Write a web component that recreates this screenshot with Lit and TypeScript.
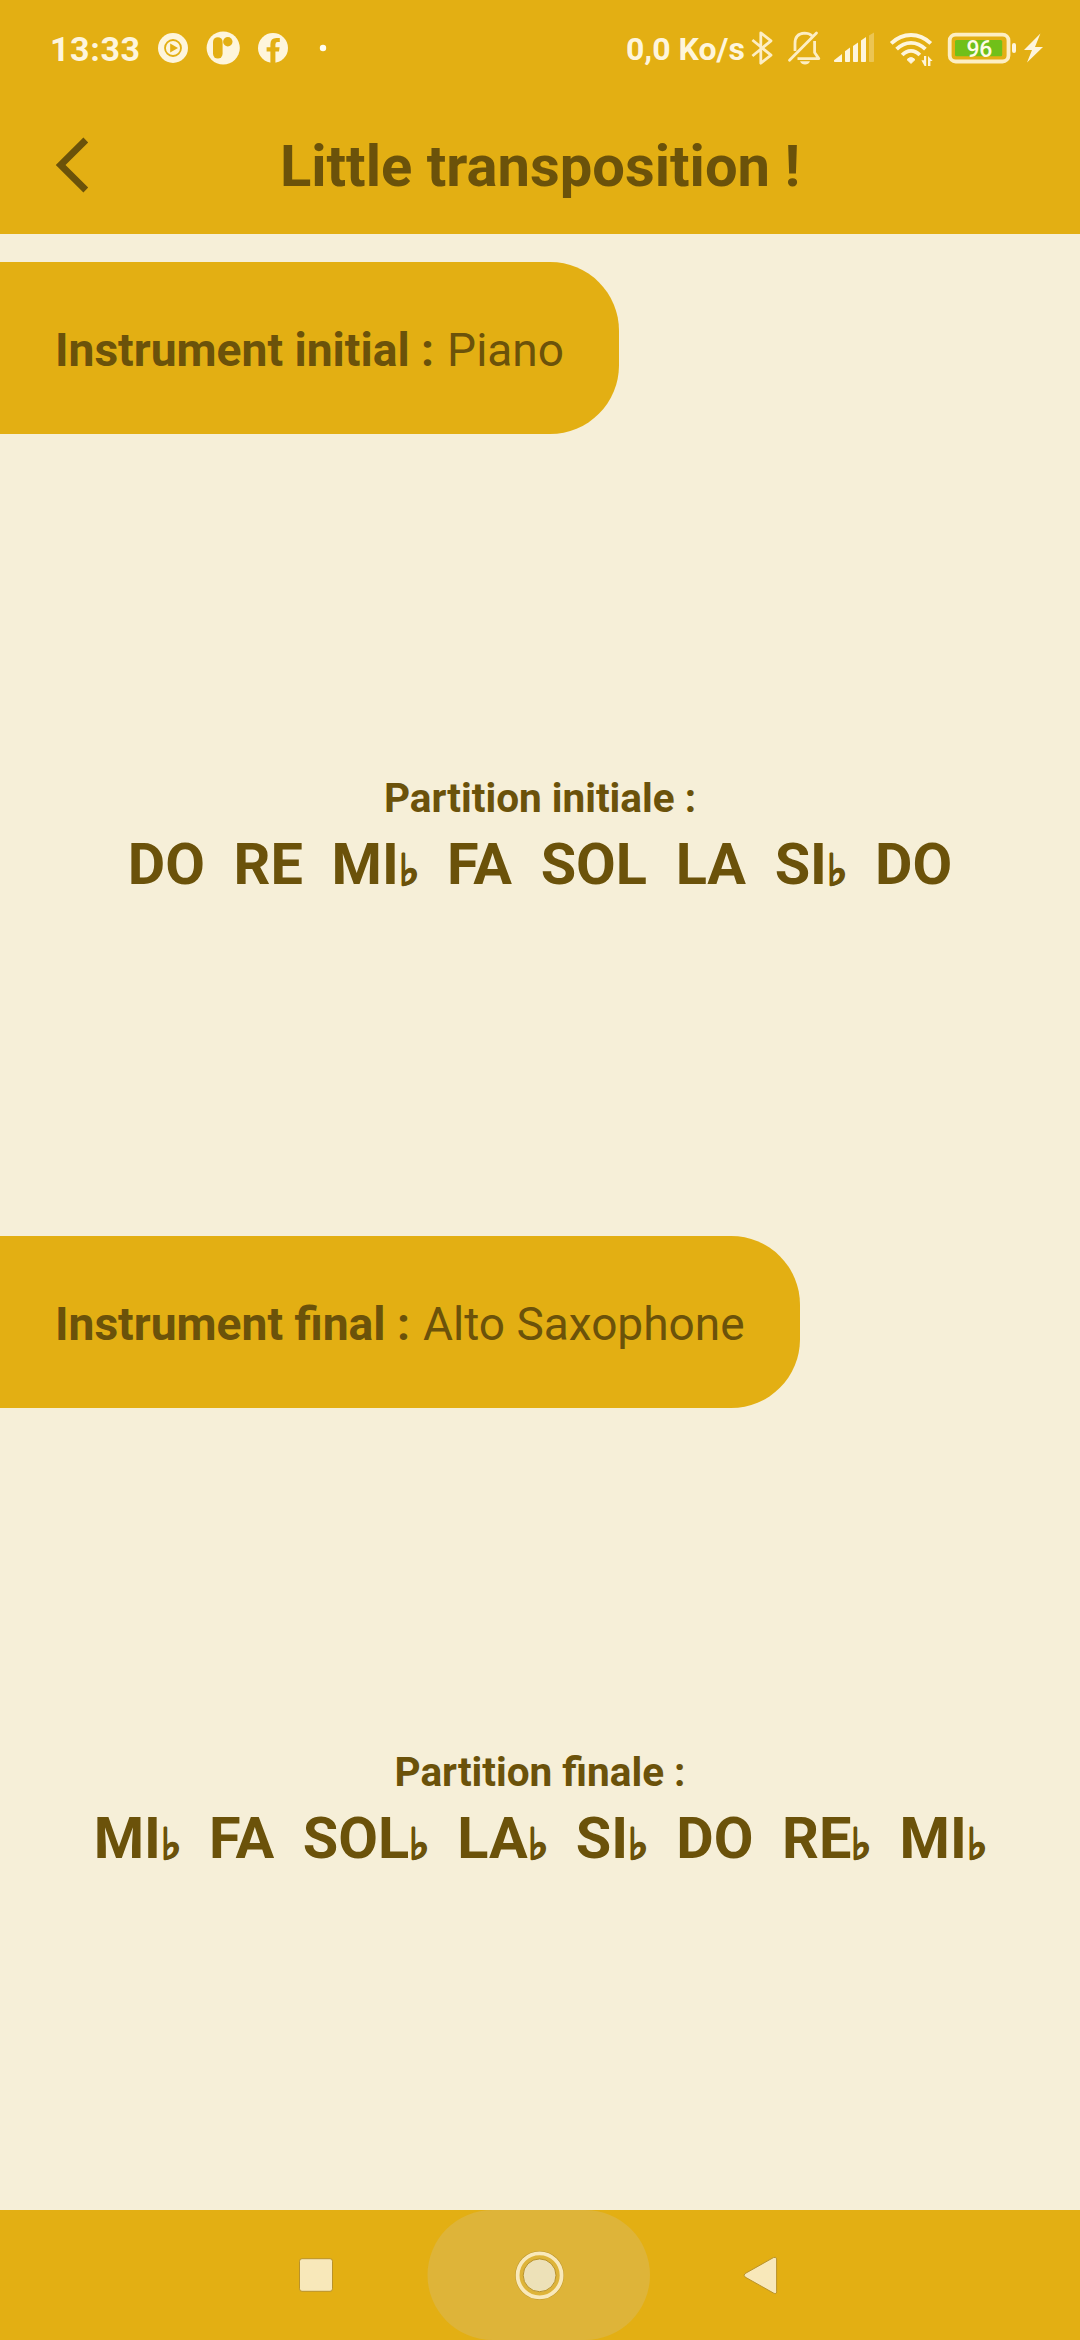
import { LitElement, html, css } from "lit";
import { customElement, property } from "lit/decorators.js";

@customElement("status-bar")
class StatusBar extends LitElement {
  static styles = css`
    :host {
      display: flex;
      align-items: center;
      justify-content: space-between;
      height: 96px;
      padding: 0 30px 0 50px;
      box-sizing: border-box;
      color: #fef5dc;
      font-family: Roboto, sans-serif;
      white-space: pre;
    }
    .group {
      display: flex;
      align-items: center;
      height: 96px;
    }
    .clock {
      width: 104px;
      font-size: 34px;
      font-weight: 700;
      line-height: 40px;
      letter-spacing: 0.6px;
      padding-top: 2px;
    }
    .speed {
      width: 122px;
      font-size: 32px;
      font-weight: 700;
      line-height: 38px;
      padding-top: 2px;
    }
    .icon {
      display: block;
      flex: none;
    }
    .pct {
      font-family: Roboto, sans-serif;
      font-size: 23px;
      font-weight: 500;
    }
  `;
  render() {
    const c = "#fef5dc";
    const d = "#fdeec4";
    const bg = "#e3af13";
    return html`
      <div class="group">
        <div class="clock">13:33</div>
        <svg class="icon" width="180" height="40" viewBox="154 28 180 40">
          <circle cx="173" cy="48" r="15" fill=${c} />
          <circle cx="173" cy="48" r="8" fill="none" stroke=${bg} stroke-width="1.8" />
          <path d="M170.2 43.6 178 48 170.2 52.4Z" fill=${bg} />
          <circle cx="223.2" cy="48" r="16.6" fill=${c} />
          <rect x="213" y="37.2" width="9.6" height="21.4" rx="4.8" fill=${bg} />
          <circle cx="227.8" cy="41.8" r="4.7" fill=${bg} />
          <circle cx="273" cy="48" r="15" fill=${c} />
          <path
            d="M270.4 64V51.6H266.6V47.2H270.4V44.2Q270.4 38 276.4 38H279.8V42H277.6Q275.4 42 275.4 44.4V47.2H279.6L279 51.6H275.4V64Z"
            fill=${bg}
          />
          <circle cx="323" cy="48" r="3.2" fill="#fffdf2" />
        </svg>
      </div>
      <div class="group">
        <div class="speed">0,0 Ko/s</div>
        <svg class="icon" width="302" height="40" viewBox="748 28 302 40">
          <path
            d="M752.4 40 771 55.2 760.8 63.2V32.8L771 40.8 752.4 56"
            fill="none" stroke=${d} stroke-width="2.8" stroke-linejoin="round"
          />
          <g fill="none" stroke=${d} stroke-width="2.8" stroke-linejoin="round">
            <path d="M795 51V43.5Q795 33.6 804.5 33.2Q809 33.2 812.2 36" />
            <path d="M814.6 41V52.5L818.8 58.6H797.5" />
            <path d="M789.5 60.2 816.5 33" stroke-linecap="round" />
          </g>
          <path d="M800 61.2H810Q808.5 64.4 805 64.4Q801.5 64.4 800 61.2Z" fill=${d} />
          <g fill=${c}>
            <path d="M834 60.3 842 54V62H834.8Q834 62 834 61.2Z" />
            <path d="M845 51.2 850 47.6V61.2Q850 62 849.2 62H845.8Q845 62 845 61.2Z" />
            <path d="M853 46 858 42.4V61.2Q858 62 857.2 62H853.8Q853 62 853 61.2Z" />
            <path d="M861 40.4 866 37V61.2Q866 62 865.2 62H861.8Q861 62 861 61.2Z" />
            <path d="M869 35.6 874 32.6V61.2Q874 62 873.2 62H869.8Q869 62 869 61.2Z" opacity=".32" />
          </g>
          <g fill="none" stroke=${c} stroke-width="3.8">
            <path d="M891.2 43.4Q900 35 911 35T930.8 43.4" />
            <path d="M896.6 49.2Q903 42.8 911 42.8T925.4 49.2" />
            <path d="M902.2 55Q906 50.8 911 50.8T919.8 55" />
          </g>
          <path d="M907 59.6Q911 55.6 915 59.6L911 63.4Z" fill=${c} stroke=${c} stroke-linejoin="round" />
          <path d="M921.4 60.2H924V56H926.2V66H924.6ZM928 66V56L932.6 61H930.4V66Z" fill=${c} />
          <rect x="949.7" y="34.7" width="58.8" height="26.8" rx="6" fill="none" stroke=${d} stroke-width="3.8" />
          <rect x="955" y="40" width="47.2" height="16.2" rx="1.5" fill="#70c019" />
          <text class="pct" x="966.4" y="57" textLength="26" fill="#fefbe6">96</text>
          <rect x="1012" y="43" width="4" height="10" rx="2" fill=${c} />
          <path d="M1040.4 33.4 1024 50H1032L1027 62.6 1043 47H1035Z" fill=${c} />
        </svg>
      </div>
    `;
  }
}

@customElement("title-bar")
class TitleBar extends LitElement {
  static styles = css`
    :host {
      display: grid;
      grid-template-columns: 120px 1fr 120px;
      align-items: center;
      height: 138px;
      color: #6b520a;
      font-family: Roboto, sans-serif;
    }
    .back {
      display: block;
      margin-left: 50px;
    }
    .title {
      margin: 0;
      padding-top: 2px;
      text-align: center;
      font-size: 57.9px;
      line-height: 68px;
      font-weight: 700;
      white-space: nowrap;
    }
  `;
  render() {
    return html`
      <svg class="back" width="44" height="64" viewBox="50 133 44 64">
        <path d="M85.8 140 60.6 165 85.8 190" fill="none" stroke="#6b520a" stroke-width="6.8" />
      </svg>
      <h1 class="title">Little transposition !</h1>
    `;
  }
}

@customElement("score-section")
class ScoreSection extends LitElement {
  @property() label = "";
  @property() instrument = "";
  @property() heading = "";
  @property({ attribute: false }) notes: string[] = [];

  static styles = css`
    :host {
      display: flex;
      flex-direction: column;
      align-items: flex-start;
      flex: 1;
      color: #6b520a;
      font-family: Roboto, sans-serif;
      white-space: pre;
    }
    .pill {
      display: flex;
      align-items: center;
      height: 172px;
      padding: 4px 55px 0;
      box-sizing: border-box;
      border-radius: 0 68.75px 68.75px 0;
      background: #e3af13;
      line-height: 55px;
    }
    .label {
      font-size: 46.2px;
      font-weight: 700;
      margin-right: 13px;
    }
    .value {
      font-size: 46px;
    }
    .score {
      flex: 1;
      align-self: stretch;
      display: flex;
      flex-direction: column;
      align-items: center;
      justify-content: center;
      gap: 9px;
      padding-top: 2px;
      font-weight: 700;
    }
    .heading {
      font-size: 40.5px;
      line-height: 48px;
    }
    .notes {
      font-size: 57.6px;
      line-height: 68px;
      height: 68px;
    }
    .flat {
      display: inline-block;
      width: 19.5px;
      font-family: "Liberation Sans", sans-serif;
      font-size: 43px;
      font-weight: 700;
      line-height: 1;
      vertical-align: -1px;
      -webkit-text-stroke: 1px #6b520a;
    }
  `;
  render() {
    return html`
      <div class="pill"><span class="label">${this.label}</span><span class="value">${this.instrument}</span></div>
      <div class="score">
        <div class="heading">${this.heading}</div>
        <div class="notes">${this.notes.map((n, i) => {
          const flat = n.endsWith("♭");
          return html`${i ? "  " : ""}${flat ? n.slice(0, -1) : n}${flat ? html`<span class="flat">♭</span>` : ""}`;
        })}</div>
      </div>
    `;
  }
}

@customElement("nav-bar")
class NavBar extends LitElement {
  static styles = css`
    :host {
      display: block;
      height: 130px;
    }
    .icons {
      display: block;
    }
  `;
  render() {
    return html`
      <svg class="icons" width="1080" height="130" viewBox="0 2210 1080 130">
        <rect x="427.5" y="2210" width="222.5" height="130" rx="65" fill="#deb439" />
        <g fill="#f8e8ba" stroke="#b9922a" stroke-width="1">
          <rect x="299.5" y="2258.7" width="33" height="32.6" rx="2.5" />
          <path d="M745 2273.6 773.4 2257.6Q776.6 2256.4 776.6 2259V2291.8Q776.6 2294.6 773.4 2293L745 2277Q743.2 2275.3 745 2273.6Z" />
        </g>
        <circle cx="539.6" cy="2275.3" r="24.4" fill="#bd962d" />
        <circle cx="539.6" cy="2275.3" r="22" fill="#deb439" stroke="#f9e9ba" stroke-width="3.8" />
        <circle cx="539.6" cy="2275.3" r="16.4" fill="#ede1b8" stroke="#b9922a" stroke-width="1" />
      </svg>
    `;
  }
}

@customElement("app-root")
class AppRoot extends LitElement {
  static styles = css`
    :host {
      display: flex;
      flex-direction: column;
      width: 1080px;
      height: 2340px;
      background: #f6efd8;
      overflow: hidden;
    }
    .bar {
      background: #e3af13;
      flex: none;
    }
    .main {
      flex: 1;
      display: flex;
      flex-direction: column;
      padding-top: 28px;
    }
  `;
  render() {
    return html`
      <header class="bar">
        <status-bar></status-bar>
        <title-bar></title-bar>
      </header>
      <main class="main">
        <score-section
          label="Instrument initial :"
          instrument="Piano"
          heading="Partition initiale :"
          .notes=${["DO", "RE", "MI♭", "FA", "SOL", "LA", "SI♭", "DO"]}
        ></score-section>
        <score-section
          label="Instrument final :"
          instrument="Alto Saxophone"
          heading="Partition finale :"
          .notes=${["MI♭", "FA", "SOL♭", "LA♭", "SI♭", "DO", "RE♭", "MI♭"]}
        ></score-section>
      </main>
      <nav-bar class="bar"></nav-bar>
    `;
  }
}
